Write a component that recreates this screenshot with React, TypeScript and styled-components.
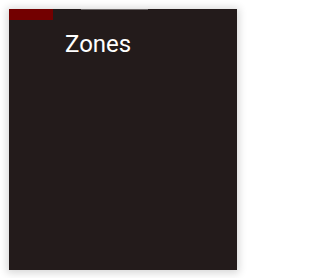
import styled, { createGlobalStyle } from "styled-components";

const GlobalStyle = createGlobalStyle`
  html, body {
    margin: 0;
    background: #ffffff;
  }
  body {
    padding: 9px 8px 8px 9px;
    font-family: Roboto, "Liberation Sans", sans-serif;
  }
`;

// ------- panel -------
const Panel = styled.section`
  width: 228px;
  height: 261px;
  background: #231b1b;
  box-shadow: 0 1px 8px 2px rgba(0, 0, 0, 0.16);
  display: flex;
  flex-direction: column;
`;

const TopBar = styled.div`
  display: flex;
  align-items: flex-start;
  height: 11px;
`;

const Tab = styled.div<{ $color: string }>`
  width: 44px;
  height: 11px;
  background: ${(p) => p.$color};
`;

const Handle = styled.div`
  width: 67px;
  height: 1px;
  margin-left: 28px;
  background: #6b6666;
`;

const Title = styled.h1`
  margin: 10px 0 0 56px;
  font-size: 24px;
  font-weight: 400;
  line-height: normal;
  color: #ffffff;
`;

export default function App() {
  return (
    <>
      <GlobalStyle />
      <Panel>
        <TopBar>
          <Tab $color="#730000" />
          <Handle />
        </TopBar>
        <Title>Zones</Title>
      </Panel>
    </>
  );
}
